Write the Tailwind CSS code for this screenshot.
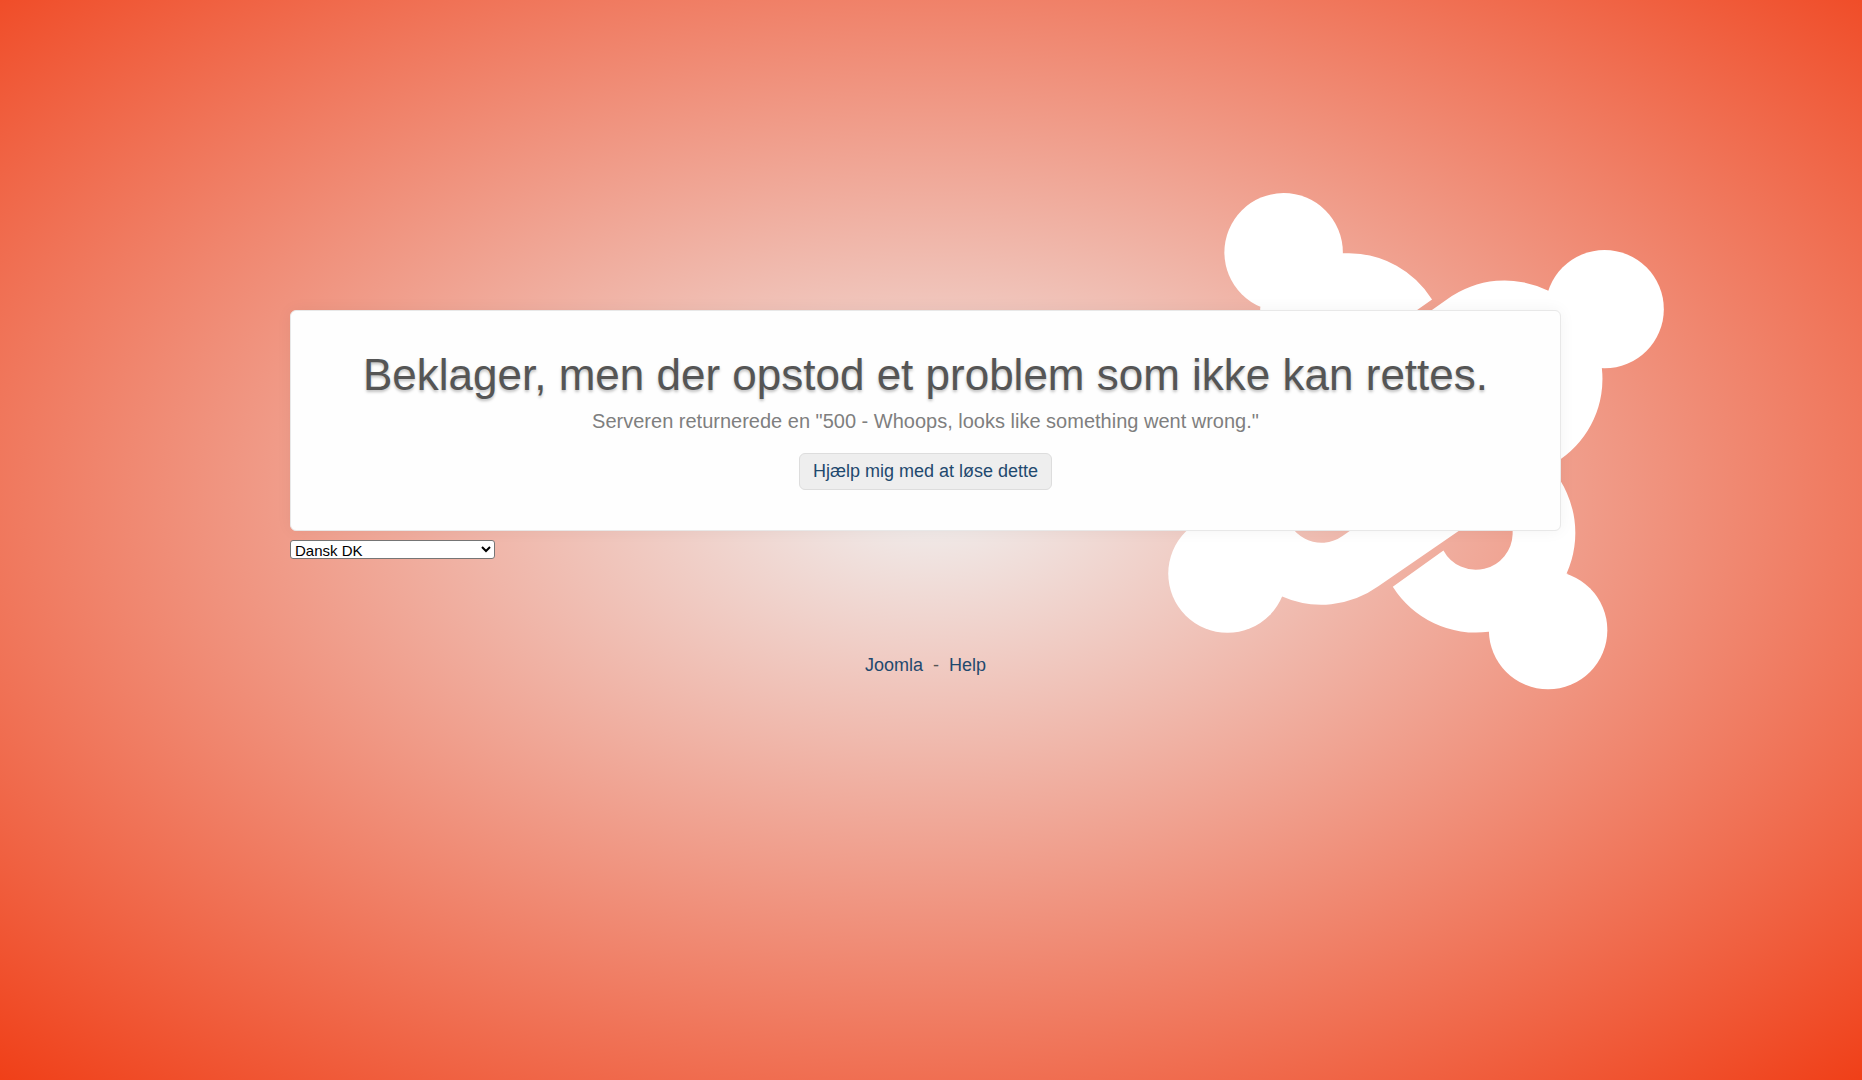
<!DOCTYPE html>
<html lang="da">
<head>
<meta charset="utf-8">
<meta name="viewport" content="width=device-width, initial-scale=1">
<title>Fejl 500</title>
<script src="https://cdn.jsdelivr.net/npm/@tailwindcss/browser@4"></script>
</head>
<body class="isolate min-h-screen bg-[radial-gradient(ellipse_75%_75%_at_50%_46%,#f0f0f0,#f03c14)] pr-[11px] pt-[310px] font-['Liberation_Sans',Arial,sans-serif] text-lg text-[#555]">
  <div class="mx-auto max-w-[1271px]">
    <main class="relative rounded-md border border-[#e8e8e8] bg-[#fefefe] px-15 pt-9 pb-10 text-center shadow-[0_0_16px_rgba(0,0,0,0.05)]">
      <svg class="absolute -top-[141px] -right-[130px] -z-10 w-[540px]" viewBox="0 0 1568 1568" fill="#fff" aria-hidden="true">
        <circle cx="388" cy="239" r="172"/>
        <circle cx="1320" cy="404" r="172"/>
        <circle cx="225" cy="1172" r="172"/>
        <circle cx="1156" cy="1336" r="172"/>
        <path d="M388 239L560 242L578 242A284 284 0 0 1 819 376L600 530L320 530V400Z"/>
        <path d="M1320 404L1155 350A284 284 0 0 0 863 375L640 532L900 840L1192 840A284 284 0 0 0 1312 575Z"/>
        <path d="M1156 1336L983 1341A286 286 0 0 1 705 1210L852 1105A107 107 0 0 0 1053 1057L1053 870L1168 870A286 286 0 0 1 1210 1171Z"/>
        <path d="M225 1172L214 978H393A105 105 0 0 0 559 1063L900 825L1020 963L663 1209A284 284 0 0 1 382 1238Z"/>
      </svg>
      <h1 class="text-[44px] leading-14 text-shadow-[0_2px_3px_rgba(0,0,0,0.25)]">Beklager, men der opstod et problem som ikke kan rettes.</h1>
      <p class="mt-1 text-xl leading-7 text-[#7f7f7f]">Serveren returnerede en "500 - Whoops, looks like something went wrong."</p>
      <button type="button" class="mt-[18px] rounded-md border border-[#ddd] bg-[#eee] px-[13px] py-1 text-lg leading-[27px] text-[#1f496e]">Hjælp mig med at løse dette</button>
    </main>
    <select aria-label="Sprog" class="mt-[9px] block h-[19px] w-[205px] appearance-auto rounded-[3px] border border-[#767676] bg-white text-[15px] leading-none text-black">
      <option>Dansk DK</option>
    </select>
    <footer class="mt-23 flex justify-center gap-[10px] text-[#555]">
      <a href="#" class="text-[#1f496e]">Joomla</a>
      <span>-</span>
      <a href="#" class="text-[#1f496e]">Help</a>
    </footer>
  </div>
</body>
</html>
